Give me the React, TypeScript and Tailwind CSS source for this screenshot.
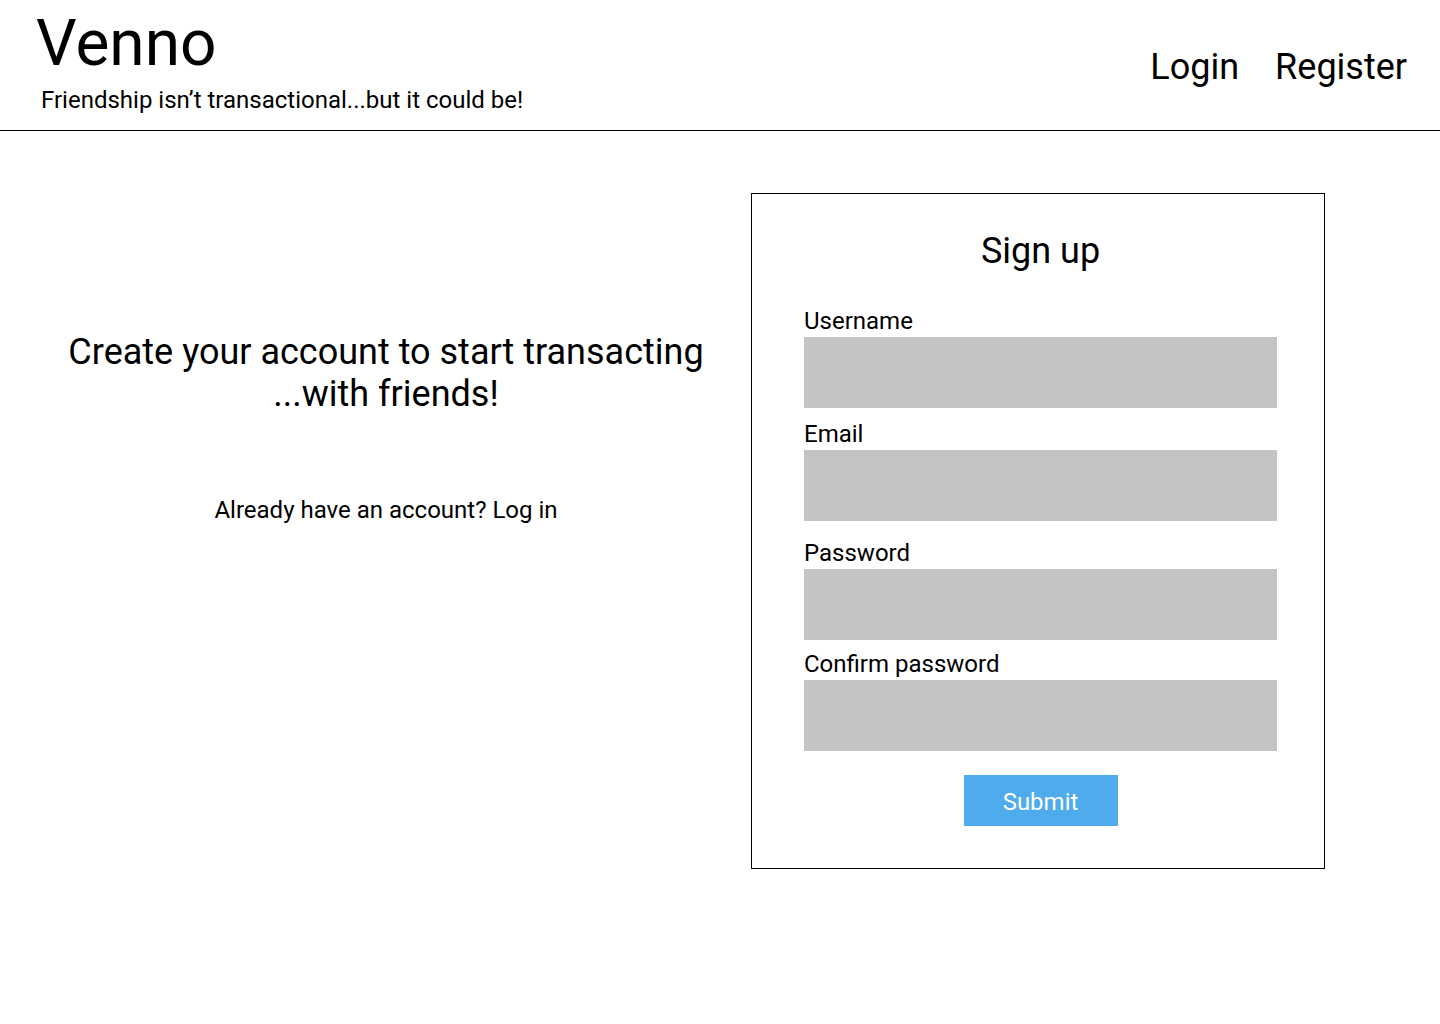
import React from "react";

function Field({ label, className }: { label: string; className?: string }) {
  return (
    <div className={className}>
      <div className="text-[24px] leading-[28px] text-black">{label}</div>
      <div className="mt-[2px] h-[71px] w-[473px] bg-[#c4c4c4]" />
    </div>
  );
}

export default function App() {
  return (
    <div
      className="min-h-[1024px] w-[1440px] bg-white text-black"
      style={{ fontFamily: "Roboto, 'Liberation Sans', sans-serif" }}
    >
      <header className="flex h-[131px] items-center justify-between border-b border-black pl-[36px] pr-[33px]">
        <div className="flex flex-col self-start pt-[6px]">
          <div className="text-[64px] leading-[75px]">Venno</div>
          <div className="ml-[5px] mt-[5px] text-[24px] leading-[28px]">
            Friendship isn’t transactional...but it could be!
          </div>
        </div>
        <nav className="mt-[3px] flex items-center gap-[36px] text-[36px] leading-[42px]">
          <a>Login</a>
          <a>Register</a>
        </nav>
      </header>
      <main className="flex pt-[62px]">
        <div className="w-[751px] pl-[21px] pt-[138px] text-center">
          <h1 className="text-[36px] leading-[42px]">
            Create your account to start transacting
            <br />
            ...with friends!
          </h1>
          <p className="mt-[81px] text-[24px] leading-[28px]">Already have an account? Log in</p>
        </div>
        <div className="h-[676px] w-[574px] border border-black pl-[52px] pt-[36px]">
          <div className="w-[473px]">
            <h2 className="text-center text-[36px] leading-[42px]">Sign up</h2>
            <Field label="Username" className="mt-[35px]" />
            <Field label="Email" className="mt-[12px]" />
            <Field label="Password" className="mt-[18px]" />
            <Field label="Confirm password" className="mt-[10px]" />
            <div className="mt-[24px] flex justify-center">
              <button className="h-[51px] w-[154px] bg-[#4facec] pt-[2px] text-[24px] leading-[28px] text-white">
                Submit
              </button>
            </div>
          </div>
        </div>
      </main>
    </div>
  );
}
